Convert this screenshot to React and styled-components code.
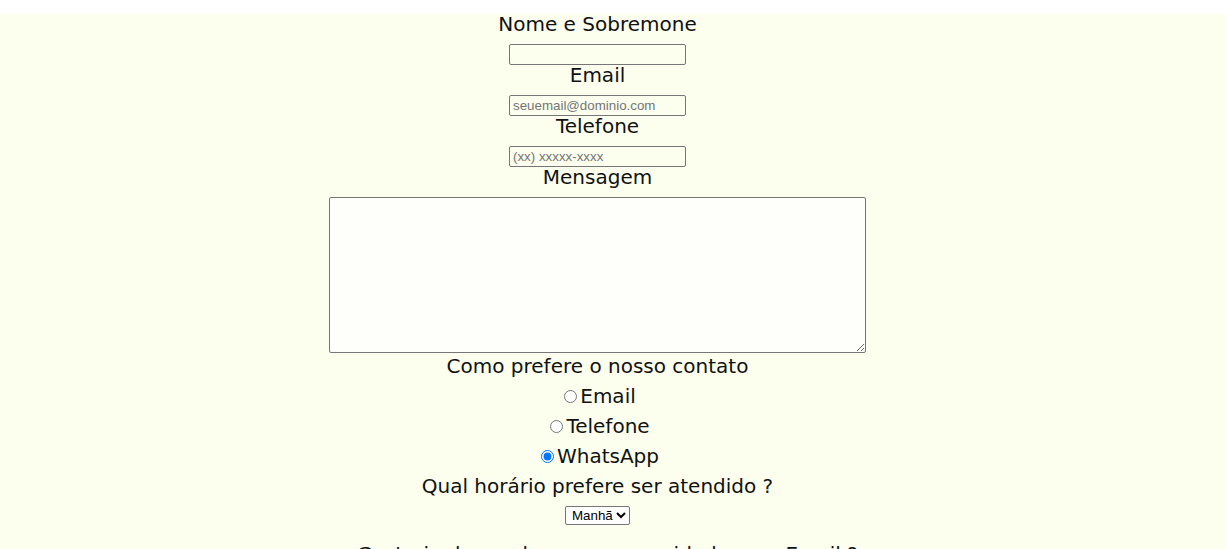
import React from "react";
import styled, { createGlobalStyle } from "styled-components";

const GlobalStyle = createGlobalStyle`
  html, body {
    margin: 0;
    padding: 0;
    background: #ffffff;
  }
  body {
    font-family: "DejaVu Sans", "Liberation Sans", sans-serif;
    color: #111111;
  }
`;

const Page = styled.main`
  margin-top: 14px;
  min-height: calc(100vh - 14px);
  background: #fcffee;
  padding-right: 31px;
  overflow: hidden;
`;

const Form = styled.form`
  display: flex;
  flex-direction: column;
  align-items: center;
  font-size: 20px;
`;

const Label = styled.label`
  display: block;
  line-height: 21px;
  text-align: center;
  margin-bottom: ${(p) => p.$after ?? 9}px;
  margin-top: ${(p) => p.$before ?? 0}px;
`;

const TextInput = styled.input`
  box-sizing: border-box;
  width: 177px;
  height: 21px;
  margin: 0;
  padding: 1px 3px;
  border: 1px solid #767676;
  border-radius: 2px;
  background: transparent;
  font-family: "Liberation Sans", Arial, sans-serif;
  font-size: 13.33px;
  color: #000;
  &::placeholder {
    color: #757575;
  }
`;

const TextArea = styled.textarea`
  box-sizing: border-box;
  width: 537px;
  height: 156px;
  margin: 0 0 3px;
  border: 1px solid #767676;
  border-radius: 2px;
  background: #fefffa;
  font-family: "Liberation Mono", monospace;
  font-size: 13.33px;
  resize: both;
`;

const Option = styled.div`
  line-height: 21px;
  margin-top: 9px;
  text-align: center;
`;

const Radio = styled.input`
  width: 13px;
  height: 13px;
  margin: 3px 3px 0 5px;
  accent-color: #0075ff;
`;

const Select = styled.select`
  box-sizing: border-box;
  width: 65px;
  height: 19px;
  margin: 0;
  padding: 0 0 0 2px;
  border: 1px solid #767676;
  border-radius: 2px;
  background: #ffffff;
  font-family: "Liberation Sans", Arial, sans-serif;
  font-size: 13.33px;
  color: #000;
`;

const Note = styled.p`
  margin: 19px 0 0;
  line-height: 21px;
  text-align: center;
  padding-left: 20px;
`;

export default function App() {
  return (
    <>
      <GlobalStyle />
      <Page>
        <Form onSubmit={(e) => e.preventDefault()}>
          <Label htmlFor="nome">Nome e Sobremone</Label>
          <TextInput id="nome" type="text" />
          <Label htmlFor="email">Email</Label>
          <TextInput id="email" type="email" placeholder="seuemail@dominio.com" />
          <Label htmlFor="tel">Telefone</Label>
          <TextInput id="tel" type="tel" placeholder="(xx) xxxxx-xxxx" />
          <Label htmlFor="msg">Mensagem</Label>
          <TextArea id="msg" />
          <Label as="div" $after={0}>Como prefere o nosso contato</Label>
          <Option>
            <Radio type="radio" name="contato" id="c-email" />
            <label htmlFor="c-email">Email</label>
          </Option>
          <Option>
            <Radio type="radio" name="contato" id="c-tel" />
            <label htmlFor="c-tel">Telefone</label>
          </Option>
          <Option>
            <Radio type="radio" name="contato" id="c-wpp" defaultChecked />
            <label htmlFor="c-wpp">WhatsApp</label>
          </Option>
          <Label htmlFor="horario" $before={9}>Qual horário prefere ser atendido ?</Label>
          <Select id="horario" defaultValue="manha">
            <option value="manha">Manhã</option>
            <option value="tarde">Tarde</option>
            <option value="noite">Noite</option>
          </Select>
          <Note>Gostaria de receber nossas novidades por Email ?</Note>
        </Form>
      </Page>
    </>
  );
}
